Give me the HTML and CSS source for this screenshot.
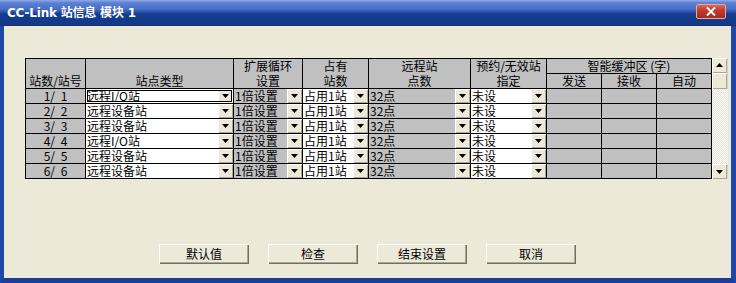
FILE: index.html
```html
<!DOCTYPE html>
<html lang="zh-CN">
<head>
<meta charset="utf-8">
<title>CC-Link 站信息 模块 1</title>
<link rel="stylesheet" href="styles.css">
</head>
<body>
<div class="window">
  <div class="titlebar">
    <span class="title">CC-Link 站信息 模块 1</span>
    <div class="close"><svg width="10" height="9" viewBox="0 0 10 9"><path d="M1 0.5 L9 8.5 M9 0.5 L1 8.5" stroke="#fff" stroke-width="2"/></svg></div>
  </div>
  <div class="client">
    <div class="tablewrap">
      <div class="grid">
        <div class="hd span2 bottom"><span class="ln">站数/站号</span></div>
        <div class="hd span2 bottom"><span class="ln">站点类型</span></div>
        <div class="hd span2"><span class="ln">扩展循环</span><span class="ln">设置</span></div>
        <div class="hd span2"><span class="ln">占有</span><span class="ln">站数</span></div>
        <div class="hd span2"><span class="ln">远程站</span><span class="ln">点数</span></div>
        <div class="hd span2"><span class="ln">预约/无效站</span><span class="ln">指定</span></div>
        <div class="hd span3"><span class="ln">智能缓冲区 (字)</span></div>
        <div class="hd"><span class="ln">发送</span></div>
        <div class="hd"><span class="ln">接收</span></div>
        <div class="hd"><span class="ln">自动</span></div>

        <div class="no"><span class="ln">1/ 1</span></div>
        <div class="combo white focus"><span class="ln">远程I/O站</span><i class="dd"></i></div>
        <div class="combo gray"><span class="ln">1倍设置</span><i class="dd"></i></div>
        <div class="combo white"><span class="ln">占用1站</span><i class="dd"></i></div>
        <div class="combo gray"><span class="ln">32点</span><i class="dd"></i></div>
        <div class="combo white"><span class="ln">未设</span><i class="dd"></i></div>
        <div class="buf"></div><div class="buf"></div><div class="buf"></div>

        <div class="no"><span class="ln">2/ 2</span></div>
        <div class="combo white"><span class="ln">远程设备站</span><i class="dd"></i></div>
        <div class="combo gray"><span class="ln">1倍设置</span><i class="dd"></i></div>
        <div class="combo white"><span class="ln">占用1站</span><i class="dd"></i></div>
        <div class="combo gray"><span class="ln">32点</span><i class="dd"></i></div>
        <div class="combo white"><span class="ln">未设</span><i class="dd"></i></div>
        <div class="buf"></div><div class="buf"></div><div class="buf"></div>

        <div class="no"><span class="ln">3/ 3</span></div>
        <div class="combo white"><span class="ln">远程设备站</span><i class="dd"></i></div>
        <div class="combo gray"><span class="ln">1倍设置</span><i class="dd"></i></div>
        <div class="combo white"><span class="ln">占用1站</span><i class="dd"></i></div>
        <div class="combo gray"><span class="ln">32点</span><i class="dd"></i></div>
        <div class="combo white"><span class="ln">未设</span><i class="dd"></i></div>
        <div class="buf"></div><div class="buf"></div><div class="buf"></div>

        <div class="no"><span class="ln">4/ 4</span></div>
        <div class="combo white"><span class="ln">远程I/O站</span><i class="dd"></i></div>
        <div class="combo gray"><span class="ln">1倍设置</span><i class="dd"></i></div>
        <div class="combo white"><span class="ln">占用1站</span><i class="dd"></i></div>
        <div class="combo gray"><span class="ln">32点</span><i class="dd"></i></div>
        <div class="combo white"><span class="ln">未设</span><i class="dd"></i></div>
        <div class="buf"></div><div class="buf"></div><div class="buf"></div>

        <div class="no"><span class="ln">5/ 5</span></div>
        <div class="combo white"><span class="ln">远程设备站</span><i class="dd"></i></div>
        <div class="combo gray"><span class="ln">1倍设置</span><i class="dd"></i></div>
        <div class="combo white"><span class="ln">占用1站</span><i class="dd"></i></div>
        <div class="combo gray"><span class="ln">32点</span><i class="dd"></i></div>
        <div class="combo white"><span class="ln">未设</span><i class="dd"></i></div>
        <div class="buf"></div><div class="buf"></div><div class="buf"></div>

        <div class="no"><span class="ln">6/ 6</span></div>
        <div class="combo white"><span class="ln">远程设备站</span><i class="dd"></i></div>
        <div class="combo gray"><span class="ln">1倍设置</span><i class="dd"></i></div>
        <div class="combo white"><span class="ln">占用1站</span><i class="dd"></i></div>
        <div class="combo gray"><span class="ln">32点</span><i class="dd"></i></div>
        <div class="combo white"><span class="ln">未设</span><i class="dd"></i></div>
        <div class="buf"></div><div class="buf"></div><div class="buf"></div>
      </div>
      <div class="vscroll">
        <div class="sbtn up"><i class="tri-up"></i></div>
        <div class="thumb"></div>
        <div class="track"></div>
        <div class="sbtn down"><i class="tri-down"></i></div>
      </div>
    </div>
    <div class="buttons">
      <button class="btn">默认值</button>
      <button class="btn">检查</button>
      <button class="btn">结束设置</button>
      <button class="btn">取消</button>
    </div>
  </div>
</div>
</body>
</html>
```
FILE: styles.css
```css
* { box-sizing: border-box; margin: 0; padding: 0; }
html, body { width: 736px; height: 283px; overflow: hidden; }
body {
  font-family: "Noto Sans CJK SC", "Noto Sans", sans-serif;
  font-size: 12px;
  color: #000;
  background: #ECE9D8;
}
.window { width: 736px; height: 283px; display: flex; flex-direction: column; }

.titlebar {
  height: 26px;
  flex: none;
  display: flex;
  align-items: center;
  justify-content: space-between;
  padding: 0 10px 0 7px;
  background: linear-gradient(to bottom, #8ea9e6 0px, #5b7fd3 3px, #4a6fc8 9px, #2a4fa6 12px, #163c8e 14px, #123886 25px, #0f2f78 26px);
}
.title {
  color: #fff;
  font-family: "DejaVu Sans", "Noto Sans CJK SC", sans-serif;
  font-weight: bold;
  font-size: 12px;
  line-height: 14px;
  letter-spacing: -0.2px;
}
.close {
  width: 30px;
  height: 15px;
  margin-top: -3px;
  background: linear-gradient(to bottom, #d9685a 0, #c13c2e 40%, #a9281c 100%);
  border: 1px solid #e9a8a0;
  border-radius: 2px;
  display: flex;
  align-items: center;
  justify-content: center;
}

.client {
  flex: 1;
  background: #ECE9D8;
  border-left: 4px solid #1e47a6;
  border-right: 5px solid #1e47a6;
  border-bottom: 5px solid #1b3f96;
  padding-top: 32px;
  display: flex;
  flex-direction: column;
}

.tablewrap { display: flex; margin-left: 21px; }

.grid {
  display: grid;
  grid-template-columns: 59px 147px 68px 65px 101px 75px 54px 54px 54px;
  grid-template-rows: repeat(8, 14px);
  gap: 1px;
  background: #000;
  border: 1px solid #000;
}

.ln {
  display: block;
  line-height: 14px;
  white-space: pre;
}

.hd {
  background: #C0C0C0;
  text-align: center;
  white-space: nowrap;
}
.span2 { grid-row: span 2; display: flex; flex-direction: column; justify-content: center; gap: 1px; }
.span2.bottom { justify-content: flex-end; }
.span3 { grid-column: span 3; }

.no {
  background: #C0C0C0;
  text-align: center;
  word-spacing: 3px;
}
.buf { background: #C0C0C0; }

.combo {
  display: flex;
  justify-content: space-between;
  align-items: stretch;
  padding-left: 1px;
  white-space: nowrap;
  position: relative;
}
.white { background: #fff; }
.gray { background: #C0C0C0; }
.focus::after {
  content: "";
  position: absolute;
  inset: 0;
  box-shadow: inset 0 0 0 1px #fff, inset 0 0 0 2px #000;
}

.dd {
  width: 15px;
  flex: none;
  background: #ECE9D8;
  box-shadow: inset 1px 1px #fff, inset -1px -1px #aca899;
  position: relative;
}
.dd::after {
  content: "";
  position: absolute;
  left: 4px;
  top: 5px;
  width: 7px;
  height: 4px;
  background: #000;
  clip-path: polygon(0 0, 100% 0, 50% 100%);
}

.vscroll {
  width: 16px;
  display: flex;
  flex-direction: column;
}
.sbtn, .thumb {
  height: 15px;
  flex: none;
  background: #ECE9D8;
  box-shadow: inset 1px 1px #fff, inset -1px -1px #aca899;
  border-right: 1px solid #d8d4c4;
  position: relative;
}
.thumb { height: 16px; }
.track {
  flex: 1;
  background-color: #f6f5f0;
  background-image: repeating-conic-gradient(#ffffff 0 25%, #e7e4d6 0 50%);
  background-size: 2px 2px;
}
.tri-up, .tri-down {
  position: absolute;
  left: 4px;
  width: 7px;
  height: 4px;
  background: #000;
}
.tri-up { top: 5px; clip-path: polygon(50% 0, 100% 100%, 0 100%); }
.tri-down { top: 6px; clip-path: polygon(0 0, 100% 0, 50% 100%); }

.buttons {
  margin-top: 65px;
  display: flex;
  justify-content: center;
  gap: 19px;
}
.btn {
  width: 90px;
  height: 20px;
  border: none;
  background: #ECE9D8;
  box-shadow: inset 1px 1px #fff, inset -1px -1px #716f64, inset -2px -2px #aca899;
  font-family: "Noto Sans CJK SC", sans-serif;
  font-size: 12px;
  color: #000;
  line-height: 18px;
}
```
